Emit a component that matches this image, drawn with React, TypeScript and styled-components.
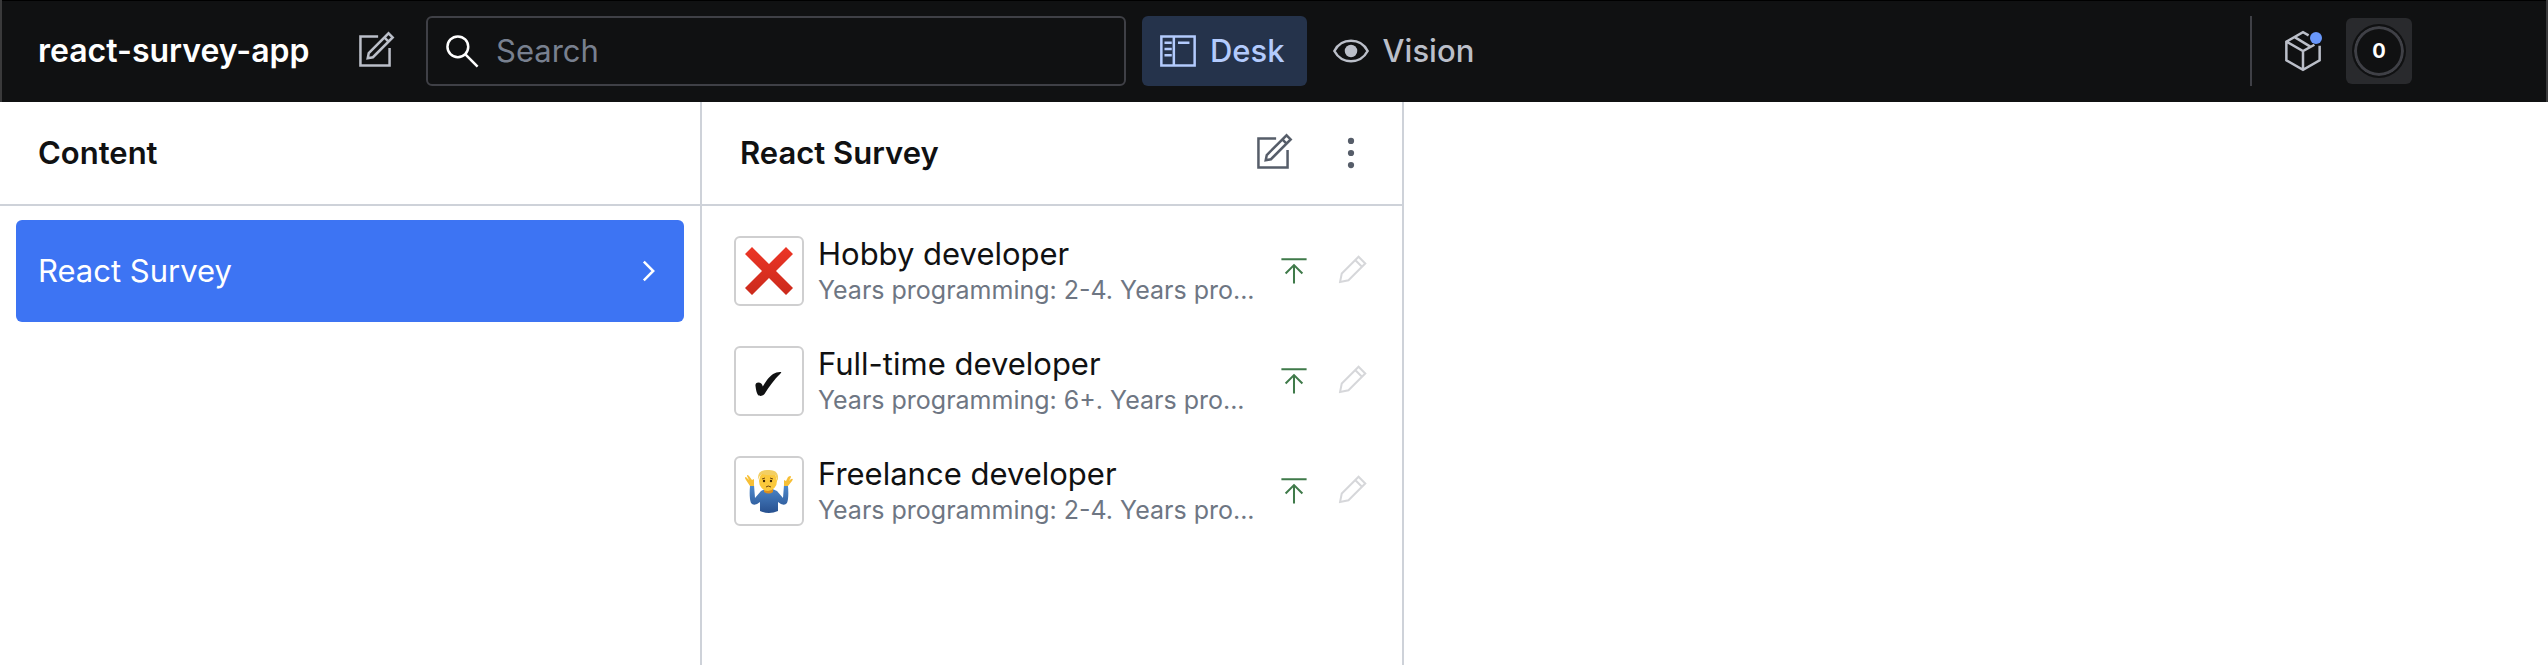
import React from "react";
import styled, { createGlobalStyle } from "styled-components";

const GlobalStyle = createGlobalStyle`
  * { box-sizing: border-box; }
  html, body, #root { height: 100%; }
  body { margin: 0; background: #fff; color: #101112; font-family: Inter, "Liberation Sans", sans-serif; }
  button, input { font: inherit; color: inherit; }
  button { border: 0; background: none; padding: 0; cursor: pointer; }
  h1, h2, ul { margin: 0; padding: 0; }
  ul { list-style: none; }
`;

const Page = styled.div`
  min-height: 100%;
  display: flex;
  flex-direction: column;
`;

const Navbar = styled.header`
  height: 102px;
  display: flex;
  align-items: center;
  padding: 0 134px 0 36px;
  background: #101112;
  box-shadow: inset 0 1px 0 #000;
  border-left: 2px solid #3a3a3b;
  border-right: 2px solid #3a3a3b;
  flex: none;
`;

const ProjectName = styled.h1`
  width: 304px;
  font-size: 32px;
  line-height: 40px;
  font-weight: 600;
  color: #fff;
  white-space: nowrap;
`;

const IconButton = styled.button<{ $color: string }>`
  position: relative;
  width: 66px;
  height: 66px;
  display: grid;
  place-items: center;
  flex: none;
  color: ${(p) => p.$color};
`;

const SearchBox = styled.label`
  flex: 0 1 700px;
  height: 70px;
  margin-left: 18px;
  padding-left: 8px;
  display: flex;
  align-items: center;
  gap: 8px;
  border: 2px solid #3f4046;
  border-radius: 6px;
  color: #fff;
`;

const SearchInput = styled.input`
  flex: 1;
  min-width: 0;
  border: 0;
  outline: 0;
  padding: 0;
  background: transparent;
  font-size: 31px;
  line-height: 40px;
  &::placeholder { color: #78808f; opacity: 1; }
`;

const Tools = styled.nav`
  display: flex;
  gap: 8px;
  margin: 0 auto 0 16px;
`;

const ToolLink = styled.a<{ $active?: boolean }>`
  height: 70px;
  padding: 0 22px 0 10px;
  display: flex;
  align-items: center;
  gap: 6px;
  border-radius: 6px;
  font-size: 31px;
  line-height: 40px;
  font-weight: 500;
  text-decoration: none;
  color: ${(p) => (p.$active ? "#b3cbfd" : "#bbbfc9")};
  background: ${(p) => (p.$active ? "#25334b" : "transparent")};
`;

const Divider = styled.div`
  width: 2px;
  height: 70px;
  margin-right: 18px;
  background: #3f4046;
`;

const PackageButton = styled(IconButton)`
  margin-right: 10px;
`;

const UpdateDot = styled.span`
  position: absolute;
  top: 14px;
  right: 14px;
  width: 12px;
  height: 12px;
  border-radius: 50%;
  background: #6998fb;
`;

const PresenceButton = styled.button`
  width: 66px;
  height: 66px;
  display: grid;
  place-items: center;
  border-radius: 6px;
  background: #292a2d;
`;

const PresenceCount = styled.span`
  width: 54px;
  height: 54px;
  display: grid;
  place-items: center;
  border: 2px solid #101112;
  border-radius: 50%;
  background: #101112;
  box-shadow: inset 0 0 0 3px #3f4046;
  color: #fff;
  font-size: 20px;
  font-weight: 700;
`;

const Panes = styled.main`
  flex: 1;
  display: flex;
`;

const Pane = styled.section`
  flex: 0 1 702px;
  min-width: 0;
  border-right: 2px solid #ced2d9;
`;

const PaneHeader = styled.div`
  height: 104px;
  padding: 0 18px 0 38px;
  display: flex;
  align-items: center;
  gap: 12px;
  border-bottom: 2px solid #ced2d9;
`;

const PaneTitle = styled.h2`
  flex: 1;
  font-size: 31px;
  line-height: 40px;
  font-weight: 600;
`;

const List = styled.ul`
  display: flex;
  flex-direction: column;
  gap: 8px;
  padding: 14px 16px;
`;

const ContentLink = styled.a`
  height: 102px;
  padding: 0 10px 0 22px;
  display: flex;
  align-items: center;
  justify-content: space-between;
  border-radius: 6px;
  background: #3d74f3;
  color: #fff;
  font-size: 31px;
  line-height: 40px;
  text-decoration: none;
`;

const DocumentLink = styled.a`
  height: 102px;
  padding: 0 14px 0 16px;
  display: flex;
  align-items: center;
  gap: 14px;
  color: inherit;
  text-decoration: none;
`;

const Thumbnail = styled.span`
  width: 70px;
  height: 70px;
  flex: none;
  display: grid;
  place-items: center;
  border: 2px solid #cfcfd0;
  border-radius: 6px;
`;

const DocumentText = styled.span`
  flex: 1;
  min-width: 0;
  display: flex;
  flex-direction: column;
  padding-bottom: 2px;
`;

const DocumentTitle = styled.span`
  font-size: 31px;
  line-height: 40px;
  white-space: nowrap;
`;

const DocumentSubtitle = styled.span`
  font-size: 25px;
  line-height: 32px;
  color: #6e7683;
  white-space: nowrap;
`;

const Status = styled.span`
  display: flex;
  gap: 15px;
`;

const Icon = ({ size = 52, color, children }: { size?: number; color?: string; children: React.ReactNode }) => (
  <svg width={size} height={size} viewBox="0 0 25 25" fill="none" stroke={color ?? "currentColor"} strokeWidth="1.2" aria-hidden="true">
    {children}
  </svg>
);

const ComposeIcon = () => (
  <Icon><path d="M17 6L19 8M14 5.5H5.5V19.5H19.5V11M9 16L9.5 13.5L19 4L21 6L11.5 15.5L9 16Z" /></Icon>
);
const SearchIcon = () => (
  <Icon><circle cx="10.5" cy="10.5" r="5" /><path d="M14 14L20 20" /></Icon>
);
const DeskIcon = () => (
  <Icon><path d="M10.5 5.5V19.5M4.5 5.5H20.5V19.5H4.5ZM6 8.5H9.5M6 11.5H9.5M6 14.5H9.5M12.5 8.5H18" /></Icon>
);
const EyeIcon = () => (
  <Icon>
    <path d="M4.5 12.5C8 6 17 6 20.5 12.5C17 19 8 19 4.5 12.5Z" />
    <circle cx="12.5" cy="12.5" r="3" fill="currentColor" stroke="none" />
  </Icon>
);
const PackageIcon = () => (
  <Icon><path d="M15.2 5L12.5 3.5L4.5 8V17L12.5 21.5L20.5 17V10M12.5 21.5V12.5M4.5 8L12.5 12.5L18 9.5M8.5 5.8L16 10.4" /></Icon>
);
const MenuIcon = () => (
  <Icon>
    <g fill="currentColor" stroke="none">
      <circle cx="12.5" cy="6.7" r="1.5" /><circle cx="12.5" cy="12.5" r="1.5" /><circle cx="12.5" cy="18.3" r="1.5" />
    </g>
  </Icon>
);
const ChevronIcon = () => <Icon><path d="M10.5 8L15 12.5L10.5 17" /></Icon>;
const PublishIcon = () => (
  <Icon size={42} color="#3f7a4a"><path d="M5 5.5H20M12.5 9V20M7.5 14L12.5 9L17.5 14" /></Icon>
);
const EditIcon = () => (
  <Icon size={42} color="#d6d7da"><path d="M15 6L19 10M6 19L7 14L17 4L21 8L11 18L6 19Z" /></Icon>
);

const CrossMark = () => (
  <svg width="48" height="48" viewBox="0 0 48 48" role="img" aria-label="No">
    <defs>
      <linearGradient id="cross" x1="0" y1="0" x2="0" y2="48" gradientUnits="userSpaceOnUse">
        <stop offset="0" stopColor="#ec3526" /><stop offset="1" stopColor="#cb2a1c" />
      </linearGradient>
    </defs>
    <path d="M7 0L24 17L41 0L48 7L31 24L48 41L41 48L24 31L7 48L0 41L17 24L0 7Z" fill="url(#cross)" />
  </svg>
);
const CheckMark = () => (
  <svg width="48" height="48" viewBox="0 0 48 48" role="img" aria-label="Yes">
    <path d="M36 15C31 14.500 26 17.500 22 23C20.500 25 19 27.500 17.800 29.500C17.300 27 15.500 25.500 13.500 25.500C11 25.500 10.200 27 10.500 29C11 33 11.500 36 13 38C14 39.300 18 39.300 19.500 37C24 30 29.500 22 35.500 16.500C36.300 15.800 36.500 15.200 36 15Z" fill="#101112" />
  </svg>
);
const ShrugMark = () => (
  <svg width="48" height="48" viewBox="0 0 48 48" role="img" aria-label="Unsure">
    <defs>
      <linearGradient id="shirt" x1="0" y1="20" x2="0" y2="46" gradientUnits="userSpaceOnUse">
        <stop offset="0" stopColor="#4c86c9" /><stop offset="1" stopColor="#27508f" />
      </linearGradient>
    </defs>
    <path d="M5 19L9 18L10 31L16 24Q24 19 32 24L38 31L39 18L43 19Q44 31 42 36Q39 40 33 35V44Q24 48 15 44V35Q9 40 6 36Q4 31 5 19Z" fill="url(#shirt)" />
    <path d="M5 19L1 13Q-1 10 1 10L4 13L2 9Q2 7 4 9L7 13L9 12L9 19ZM43 19L47 14Q49 11 46 12L44 14L46 10Q46 8 43 10L41 14L39 13L39 19Z" fill="#f7bf36" />
    <path d="M19 21H28V25Q24 28 19 25Z" fill="#dc8e1d" />
    <ellipse cx="23" cy="14" rx="9" ry="10" fill="#fbc93c" />
    <path d="M13 13Q12 3 22 3Q32 2 33 9V14L30 8Q23 9 17 7Q14 9 13 13Z" fill="#f3cf62" />
    <path d="M17 12L20 11M25 11L28 12M21 20Q23 18 26 20" stroke="#6b4310" fill="none" />
    <circle cx="19" cy="14" r="1.200" fill="#3b2409" /><circle cx="26" cy="14" r="1.200" fill="#3b2409" />
  </svg>
);

const documents = [
  { title: "Hobby developer", subtitle: "Years programming: 2-4. Years pro...", mark: <CrossMark /> },
  { title: "Full-time developer", subtitle: "Years programming: 6+. Years pro...", mark: <CheckMark /> },
  { title: "Freelance developer", subtitle: "Years programming: 2-4. Years pro...", mark: <ShrugMark /> },
];

export default function App() {
  return (
    <Page>
      <GlobalStyle />
      <Navbar>
        <ProjectName>react-survey-app</ProjectName>
        <IconButton $color="#bbbfc9" aria-label="Create new document"><ComposeIcon /></IconButton>
        <SearchBox>
          <SearchIcon />
          <SearchInput type="search" placeholder="Search" aria-label="Search" />
        </SearchBox>
        <Tools>
          <ToolLink href="#desk" $active><DeskIcon />Desk</ToolLink>
          <ToolLink href="#vision"><EyeIcon />Vision</ToolLink>
        </Tools>
        <Divider />
        <PackageButton $color="#bbbfc9" aria-label="Package updates"><PackageIcon /><UpdateDot /></PackageButton>
        <PresenceButton aria-label="Online users"><PresenceCount>0</PresenceCount></PresenceButton>
      </Navbar>
      <Panes>
        <Pane>
          <PaneHeader><PaneTitle>Content</PaneTitle></PaneHeader>
          <List>
            <li><ContentLink href="#react-survey">React Survey<ChevronIcon /></ContentLink></li>
          </List>
        </Pane>
        <Pane>
          <PaneHeader>
            <PaneTitle>React Survey</PaneTitle>
            <IconButton $color="#565d69" aria-label="Create React Survey"><ComposeIcon /></IconButton>
            <IconButton $color="#565d69" aria-label="Show menu"><MenuIcon /></IconButton>
          </PaneHeader>
          <List>
            {documents.map((doc) => (
              <li key={doc.title}>
                <DocumentLink href="#document">
                  <Thumbnail>{doc.mark}</Thumbnail>
                  <DocumentText>
                    <DocumentTitle>{doc.title}</DocumentTitle>
                    <DocumentSubtitle>{doc.subtitle}</DocumentSubtitle>
                  </DocumentText>
                  <Status><PublishIcon /><EditIcon /></Status>
                </DocumentLink>
              </li>
            ))}
          </List>
        </Pane>
      </Panes>
    </Page>
  );
}
